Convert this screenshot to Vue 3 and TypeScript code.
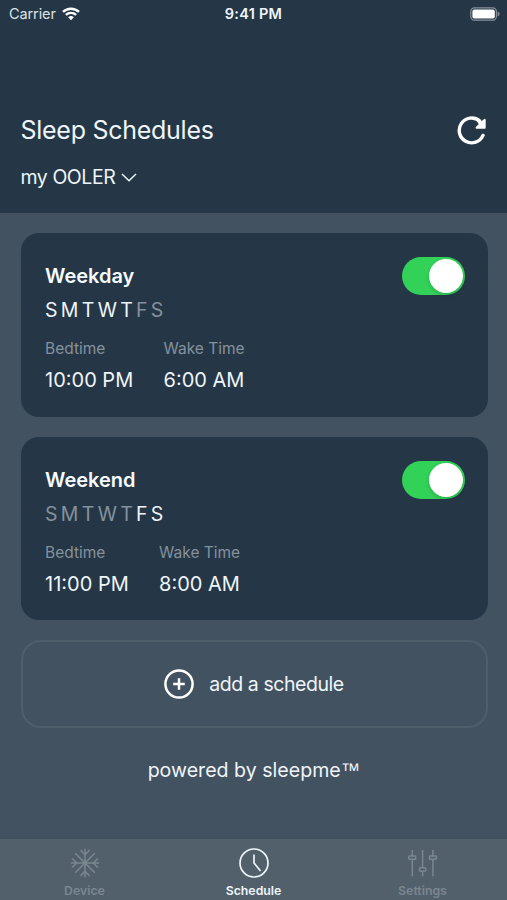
<script setup lang="ts">
import { ref } from 'vue'

interface Schedule {
  name: string
  activeDays: number[]
  bedtime: string
  wakeTime: string
  enabled: boolean
}

const dayLetters = ['S', 'M', 'T', 'W', 'T', 'F', 'S']

const schedules = ref<Schedule[]>([
  { name: 'Weekday', activeDays: [0, 1, 2, 3, 4], bedtime: '10:00 PM', wakeTime: '6:00 AM', enabled: true },
  { name: 'Weekend', activeDays: [5, 6], bedtime: '11:00 PM', wakeTime: '8:00 AM', enabled: true },
])
</script>

<template>
  <div class="screen">
    <header class="header">
      <div class="status">
        <div class="carrier">
          <span>Carrier</span>
          <svg class="wifi" viewBox="0 0 18 14" width="18" height="14">
            <path d="M1 4.9a11.6 11.6 0 0 1 16 0" />
            <path d="M3.9 7.9a7.4 7.4 0 0 1 10.2 0" />
            <path class="fill" d="M6.1 10.3a4.2 4.2 0 0 1 5.8 0L9 13.3z" />
          </svg>
        </div>
        <span class="clock">9:41 PM</span>
        <svg class="battery" viewBox="0 0 30 14" width="30" height="14">
          <rect class="shell" x="0.8" y="0.8" width="25.6" height="12.4" rx="3.6" />
          <rect class="charge" x="2.4" y="2.4" width="22.4" height="9.2" rx="2" />
          <path class="cap" d="M27.7 4.6c2.4.8 2.4 4 0 4.8z" />
        </svg>
      </div>
      <div class="heading">
        <h1>Sleep Schedules</h1>
        <button class="icon-button" aria-label="Refresh">
          <svg viewBox="0 0 30 30" width="30" height="30">
            <path class="arc" d="M26 20.4A12.4 12.4 0 1 1 22.6 5.9" />
            <path class="head" d="M27.7 4.8v7.9H19.6l3.4-3.4-2-3 4 .9z" />
          </svg>
        </button>
      </div>
      <div class="device">
        <span>my OOLER</span>
        <svg viewBox="0 0 16 9" width="16" height="9"><path d="M1 1l7 6.7L15 1" /></svg>
      </div>
    </header>

    <main class="content">
      <section v-for="s in schedules" :key="s.name" class="card">
        <div class="card-top">
          <h2>{{ s.name }}</h2>
          <button class="toggle" :class="{ on: s.enabled }" role="switch" :aria-checked="s.enabled" @click="s.enabled = !s.enabled">
            <span class="knob"></span>
          </button>
        </div>
        <div class="days">
          <span v-for="(d, i) in dayLetters" :key="i" :class="{ active: s.activeDays.includes(i) }">{{ d }}</span>
        </div>
        <div class="times">
          <div class="time">
            <span class="label">Bedtime</span>
            <span class="value">{{ s.bedtime }}</span>
          </div>
          <div class="time">
            <span class="label">Wake Time</span>
            <span class="value">{{ s.wakeTime }}</span>
          </div>
        </div>
      </section>

      <button class="add">
        <svg viewBox="0 0 30 30" width="30" height="30">
          <circle cx="15" cy="15" r="13.6" />
          <path d="M15 9.2v11.6M9.2 15h11.6" />
        </svg>
        <span>add a schedule</span>
      </button>
      <p class="powered">powered by sleepme<span class="tm">™</span></p>
    </main>

    <nav class="tabs">
      <a class="tab">
        <svg class="snow" viewBox="0 0 30 30" width="30" height="30">
          <path d="M15 .8v28.4M.8 15h28.4M5.2 5.2l19.6 19.6M24.8 5.2L5.2 24.8" />
          <path d="M11 1.8v1l4 3.8 4-3.8v-1M11 28.2v-1l4-3.8 4 3.8v1M1.8 11h1l3.8 4-3.8 4h-1M28.2 11h-1l-3.8 4 3.8 4h1" />
        </svg>
        <span>Device</span>
      </a>
      <a class="tab current">
        <svg class="time-icon" viewBox="0 0 30 30" width="30" height="30">
          <circle cx="15" cy="15" r="14" />
          <path d="M15 6.5V15l6.5 8" />
        </svg>
        <span>Schedule</span>
      </a>
      <a class="tab">
        <svg class="sliders" viewBox="0 0 30 30" width="30" height="30">
          <path d="M4.3 2v6M4.3 11.2v17M14.6 2v17.8M14.6 23.2v5M24.9 2v6M24.9 11.2v17" />
          <rect x="0.9" y="8" width="6.8" height="3.2" rx="0.5" />
          <rect x="11.4" y="19.8" width="6.4" height="3.4" rx="1.2" />
          <rect x="21.5" y="8" width="6.8" height="3.2" rx="0.5" />
        </svg>
        <span>Settings</span>
      </a>
    </nav>
  </div>
</template>

<style>
body {
  background: #435260;
}
</style>

<style scoped>
* {
  box-sizing: border-box;
}
.screen {
  display: flex;
  flex-direction: column;
  height: 900px;
  background: #435260;
  color: #eef5fa;
  font-family: Inter, "Liberation Sans", sans-serif;
}
svg {
  display: block;
  flex: none;
  fill: none;
  stroke: currentColor;
}
button {
  padding: 0;
  border: 0;
  background: none;
  color: inherit;
  font: inherit;
}
h1, h2, p {
  margin: 0;
  font-weight: 400;
}
.header {
  height: 213px;
  background: #253746;
}
.status {
  display: grid;
  grid-template-columns: 1fr auto 1fr;
  align-items: center;
  height: 27px;
  padding: 0 7px 0 9px;
  font-size: 14.5px;
}
.carrier {
  display: flex;
  align-items: center;
  gap: 6px;
  color: #dbe2e7;
  letter-spacing: -0.1px;
}
.wifi {
  color: #fff;
  stroke-width: 2.4;
}
.wifi .fill {
  fill: #fff;
  stroke: none;
}
.clock {
  margin-right: 2px;
  font-weight: 600;
  letter-spacing: 0.25px;
}
.battery {
  justify-self: end;
}
.shell {
  stroke: #87919a;
  stroke-width: 1.2;
}
.charge {
  fill: #fff;
  stroke: none;
}
.cap {
  fill: #87919a;
  stroke: none;
}
.heading {
  display: flex;
  align-items: center;
  justify-content: space-between;
  height: 36px;
  margin-top: 85px;
  padding: 0 20px 0 20.5px;
}
h1 {
  font-size: 25px;
  letter-spacing: -0.27px;
}
.icon-button {
  color: #fff;
}
.arc {
  stroke-width: 3.4;
  stroke-linecap: round;
}
.head {
  fill: currentColor;
  stroke-width: 2;
  stroke-linejoin: round;
}
.device {
  display: flex;
  align-items: center;
  gap: 6px;
  height: 30px;
  margin-top: 14px;
  padding-left: 20.5px;
  font-size: 19.5px;
  letter-spacing: -0.45px;
}
.device svg {
  stroke-width: 1.5;
}
.content {
  display: flex;
  flex: 1;
  flex-direction: column;
  gap: 20px;
  padding: 20px 19.5px 0 20.5px;
}
.card {
  height: 183.5px;
  padding: 24px 22.5px 0 24.5px;
  border-radius: 18px;
  background: #253746;
}
.card-top {
  display: flex;
  align-items: center;
  justify-content: space-between;
  height: 38px;
}
h2 {
  color: #f6fbfe;
  font-size: 20px;
  font-weight: 600;
}
.toggle {
  display: flex;
  width: 63px;
  height: 38px;
  padding: 2px;
  border-radius: 19px;
  background: #5b6873;
}
.toggle.on {
  justify-content: flex-end;
  background: #32d158;
}
.knob {
  width: 34px;
  height: 34px;
  border-radius: 50%;
  background: #fff;
  box-shadow: 0 2px 4px rgba(0, 0, 0, 0.15);
}
.days {
  display: flex;
  gap: 3.3px;
  height: 30px;
  line-height: 30px;
  color: #84919d;
  font-size: 19.5px;
}
.days .active {
  color: #eef5fa;
}
.times {
  display: flex;
  gap: 30.3px;
  margin-top: 13px;
}
.time {
  display: flex;
  flex-direction: column;
}
.label {
  height: 22px;
  line-height: 22px;
  color: #84919d;
  font-size: 15.5px;
}
.value {
  height: 42px;
  line-height: 41px;
  font-size: 20px;
}
.add {
  display: flex;
  align-items: center;
  justify-content: center;
  gap: 15px;
  height: 88px;
  border: 2px solid #4e5e6a;
  border-radius: 20px;
  font-size: 19.5px;
  letter-spacing: -0.45px;
}
.add svg {
  color: #fff;
  stroke-width: 2.5;
}
.powered {
  margin-top: 8px;
  line-height: 28px;
  text-align: center;
  font-size: 19.6px;
}
.tm {
  font-family: "Liberation Sans", sans-serif;
  line-height: 1;
}
.tabs {
  display: grid;
  grid-template-columns: repeat(3, 1fr);
  height: 61px;
  padding-top: 9px;
  background: #52606b;
}
.tab {
  display: flex;
  flex-direction: column;
  align-items: center;
  color: #7b868f;
  font-size: 12.3px;
  font-weight: 600;
}
.tab span {
  margin-top: 5px;
  line-height: 16px;
}
.tab.current {
  color: #eef5fa;
}
.snow, .sliders {
  stroke-width: 1.5;
}
.time-icon {
  stroke-width: 1.7;
}
</style>
